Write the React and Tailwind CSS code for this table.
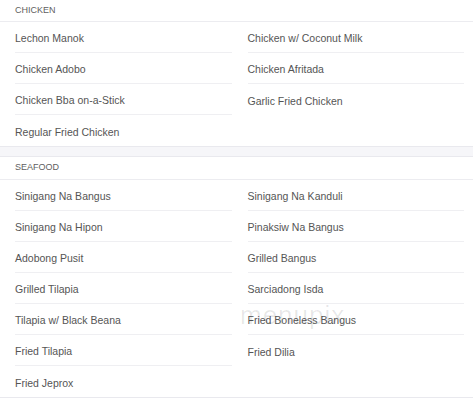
const chicken = [
  ['Lechon Manok', 'Chicken Adobo', 'Chicken Bba on-a-Stick', 'Regular Fried Chicken'],
  ['Chicken w/ Coconut Milk', 'Chicken Afritada', 'Garlic Fried Chicken'],
];

const seafood = [
  [
    'Sinigang Na Bangus',
    'Sinigang Na Hipon',
    'Adobong Pusit',
    'Grilled Tilapia',
    'Tilapia w/ Black Beana',
    'Fried Tilapia',
    'Fried Jeprox',
  ],
  [
    'Sinigang Na Kanduli',
    'Pinaksiw Na Bangus',
    'Grilled Bangus',
    'Sarciadong Isda',
    'Fried Boneless Bangus',
    'Fried Dilia',
  ],
];

function Column({ items }) {
  return (
    <ul>
      {items.map((item, i) => (
        <li
          key={item}
          className={`flex h-[31px] items-center pt-[4px] text-[10.5px] text-[#555555] ${
            i < items.length - 1 ? 'border-b border-[#efeff2]' : ''
          }`}
        >
          {item}
        </li>
      ))}
    </ul>
  );
}

function Section({ title, columns, tall }) {
  return (
    <section>
      {/* header */}
      <div
        className={`flex items-center border-b border-[#ececf0] pl-[15px] text-[9px] text-[#606060] ${
          tall ? 'h-[23px]' : 'h-[22px]'
        }`}
      >
        {title}
      </div>
      {/* items */}
      <div className="grid grid-cols-2 gap-4 pl-[15px] pr-[9px]">
        {columns.map((col, i) => (
          <Column key={i} items={col} />
        ))}
      </div>
    </section>
  );
}

export default function App() {
  return (
    <div className="relative h-[401px] w-[473px] overflow-hidden bg-white font-['Liberation_Sans',Arial,sans-serif]">
      <Section title="CHICKEN" columns={chicken} />

      {/* Divider band */}
      <div className="h-[11px] border-y border-[#e9e9ee] bg-[#f6f6f9]" />

      <Section title="SEAFOOD" columns={seafood} tall />
      <div className="border-b border-[#e9e9ee]" />

      {/* watermark */}
      <div className="pointer-events-none absolute left-[240px] top-[296px] text-[26px] tracking-[1px] text-black/[0.09]">
        menupix
      </div>
    </div>
  );
}
